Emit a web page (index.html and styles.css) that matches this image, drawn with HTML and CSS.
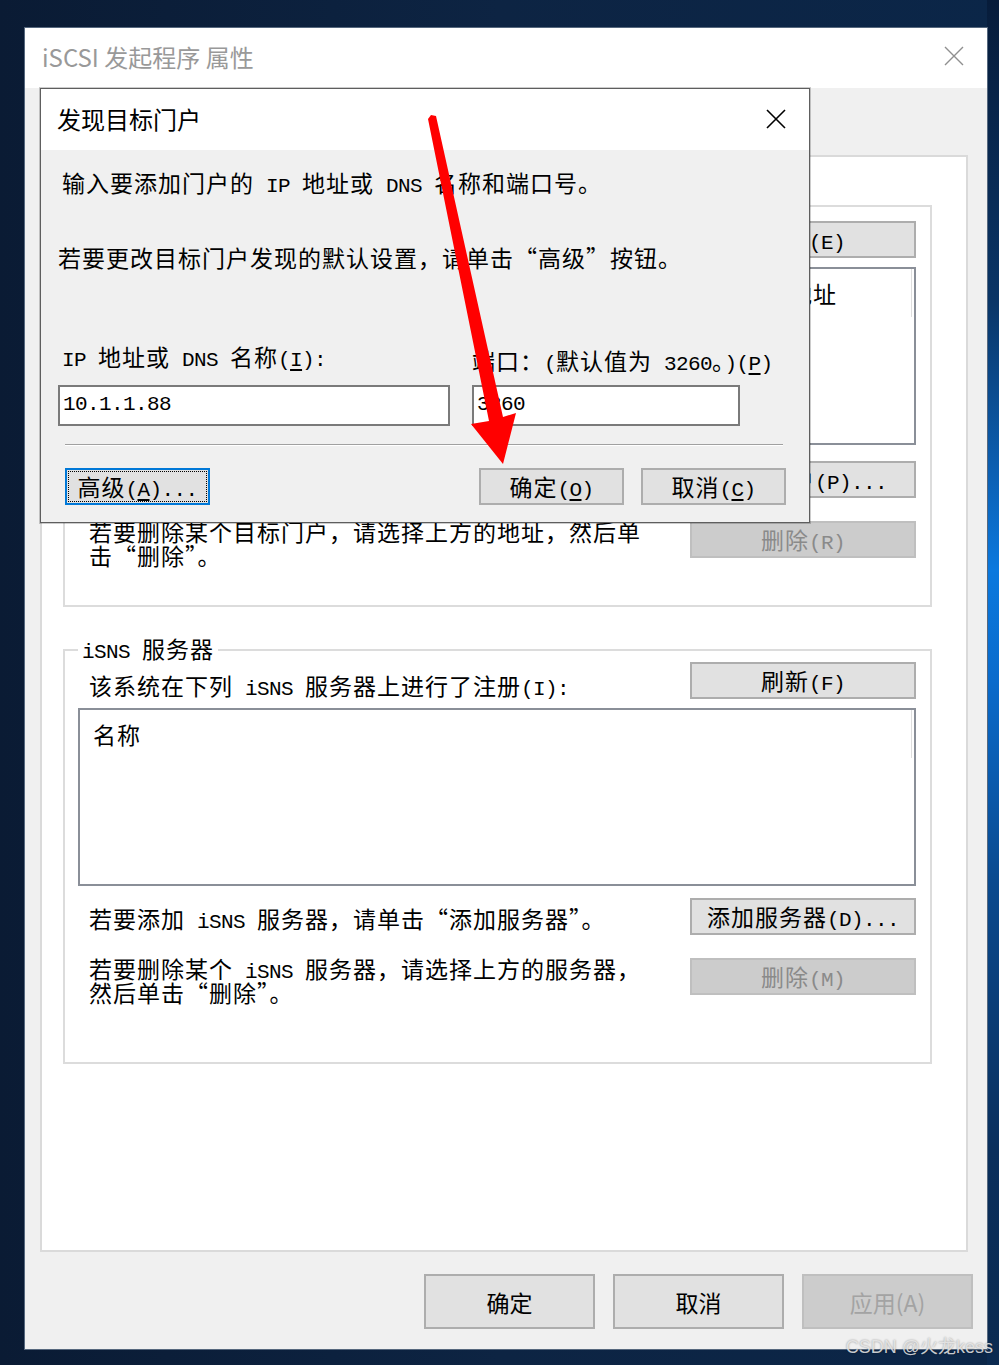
FILE: index.html
```html
<!DOCTYPE html>
<html lang="zh-CN">
<head>
    <meta charset="UTF-8">
    <meta name="viewport" content="width=device-width, initial-scale=1.0">
    <title>iSCSI 发起程序 属性</title>
    <link rel="stylesheet" href="styles.css">
</head>
<body>
<div class="desktop">

    <!-- ventana principal -->
    <div class="window">
        <div class="titlebar">
            <span class="title">iSCSI 发起程序 属性</span>
            <svg class="x-close" width="20" height="20" viewBox="0 0 20 20"><path d="M1 1L19 19M19 1L1 19" stroke="#8f8f8f" stroke-width="1.4" fill="none"/></svg>
        </div>
        <div class="window-body">
            <div class="tabs"></div>
            <div class="tab-page ss">
                <fieldset class="group g-portals">
                    <legend>目标门户</legend>
                    <div class="row row-top">
                        <p class="hint">系统将在下列门户上查找目标<span class="lat">(T):</span></p>
                        <button class="btn">刷新<span class="lat">(E)</span></button>
                    </div>
                    <div class="listview">
                        <div class="lv-head">
                            <span>地址</span>
                            <span>端口</span>
                            <span>适配器</span>
                            <span><span class="lat">IP </span>地址</span>
                        </div>
                    </div>
                    <div class="row row-add">
                        <p class="hint">若要添加目标门户，请单击“发现门户”。</p>
                        <button class="btn">发现门户<span class="lat">(P)...</span></button>
                    </div>
                    <div class="row row-del">
                        <p class="hint">若要删除某个目标门户，请选择上方的地址，然后单<br>击“删除”。</p>
                        <button class="btn" disabled>删除<span class="lat">(R)</span></button>
                    </div>
                </fieldset>

                <fieldset class="group g-isns">
                    <legend><span class="lat">iSNS </span>服务器</legend>
                    <div class="row row-top">
                        <p class="hint">该系统在下列<span class="lat"> iSNS </span>服务器上进行了注册<span class="lat">(I):</span></p>
                        <button class="btn">刷新<span class="lat">(F)</span></button>
                    </div>
                    <div class="listview">
                        <div class="lv-head">
                            <span>名称</span>
                        </div>
                    </div>
                    <div class="row row-add">
                        <p class="hint">若要添加<span class="lat"> iSNS </span>服务器，请单击“添加服务器”。</p>
                        <button class="btn">添加服务器<span class="lat">(D)...</span></button>
                    </div>
                    <div class="row row-del">
                        <p class="hint">若要删除某个<span class="lat"> iSNS </span>服务器，请选择上方的服务器，<br>然后单击“删除”。</p>
                        <button class="btn" disabled>删除<span class="lat">(M)</span></button>
                    </div>
                </fieldset>
            </div>
            <div class="footer">
                <button class="btn-lg">确定</button>
                <button class="btn-lg">取消</button>
                <button class="btn-lg" disabled>应用(A)</button>
            </div>
        </div>
    </div>

    <!-- dialogo encima -->
    <div class="dialog">
        <div class="dlg-title">
            <span>发现目标门户</span>
            <svg class="x-close" width="20" height="20" viewBox="0 0 20 20"><path d="M1 1L19 19M19 1L1 19" stroke="#000" stroke-width="1.6" fill="none"/></svg>
        </div>
        <div class="dlg-body ss">
            <p class="dlg-line l1">输入要添加门户的<span class="lat"> IP </span>地址或<span class="lat"> DNS </span>名称和端口号。</p>
            <p class="dlg-line l2">若要更改目标门户发现的默认设置，请单击“高级”按钮。</p>
            <div class="fields">
                <div class="field field-ip">
                    <label class="lbl"><span class="lat">IP </span>地址或<span class="lat"> DNS </span>名称<span class="lat">(<u>I</u>):</span></label>
                    <div class="input">10.1.1.88</div>
                </div>
                <div class="field field-port">
                    <label class="lbl lbl-port">端口：<span class="lat">(</span>默认值为<span class="lat"> 3260</span>。<span class="lat">)(<u>P</u>)</span></label>
                    <div class="input">3260</div>
                </div>
            </div>
            <div class="sep"></div>
            <div class="dlg-buttons">
                <button class="btn btn-focus">高级<span class="lat">(<u>A</u>)...</span></button>
                <button class="btn btn-ok">确定<span class="lat">(<u>O</u>)</span></button>
                <button class="btn">取消<span class="lat">(<u>C</u>)</span></button>
            </div>
        </div>
    </div>

    <svg class="arrow" width="999" height="1365" viewBox="0 0 999 1365">
        <polygon points="428,119 431,115 436,116 503,417 516,413 503,464 471,424 489,421" fill="#ff0000"/>
    </svg>

    <div class="watermark">CSDN @火龙kess</div>
</div>
</body>
</html>
```

FILE: styles.css
```css
* {
    box-sizing: border-box;
}

body {
    margin: 0;
    background: #0b1d38;
    font-family: "Noto Sans CJK SC", "Noto Sans", sans-serif;
    color: #000;
}

p {
    margin: 0;
}

.desktop {
    position: relative;
    width: 999px;
    height: 1365px;
    padding: 27px 11px 15px 24px;
    background:
        linear-gradient(180deg, #071c3a 0, #0a3566 300px, #0c5fb2 470px, #0b79de 570px, #0a6bcc 680px, #0a4a8f 880px, #0a2f5c 1150px, #0b2a50 100%) right top / 12px 100% no-repeat,
        linear-gradient(90deg, #0a1b34 0, #0d2443 50%, #0b2648 100%);
}

/* texto estilo SimSun */
.ss {
    font-size: 23px;
    letter-spacing: 1px;
}

.lat {
    font-family: "Liberation Mono", monospace;
    font-size: 21px;
    letter-spacing: -0.6px;
    line-height: 0;
}

u {
    text-underline-offset: 3px;
}

.x-close {
    display: block;
}

/* ventana */
.window {
    width: 964px;
    height: 1323px;
    border: 1px solid #56687e;
    background: #f0f0f0;
    display: flex;
    flex-direction: column;
}

.titlebar {
    height: 60px;
    flex-shrink: 0;
    background: #fff;
    display: flex;
    align-items: center;
    justify-content: space-between;
    padding: 0 23px 4px 17px;
}

.title {
    font-size: 24px;
    color: #999;
}

.window-body {
    flex: 1;
    display: flex;
    flex-direction: column;
    padding: 0 14px 20px 15px;
}

.tabs {
    height: 67px;
}

.tab-page {
    height: 1097px;
    margin-right: 5px;
    padding-top: 36px;
    background: #fff;
    border: 2px solid #dadada;
}

.group {
    margin: 0 34px 0 21px;
    padding: 0 14px 38px 13px;
    border: 2px solid #dcdcdc;
    min-width: 0;
}

.group legend {
    padding: 0 4px;
    height: 26px;
    line-height: 22px;
}

.g-isns {
    margin-top: 30px;
    padding-bottom: 58px;
}

.row {
    display: flex;
    justify-content: space-between;
    align-items: flex-start;
}

.hint {
    margin: 8px 0 0 11px;
    line-height: 24px;
    white-space: nowrap;
}

.g-portals .row-top { margin-top: 2px; }
.g-isns .row-top { margin-top: -1px; }
.row-top .hint { margin-top: 11px; }

.g-portals .row-add { margin-top: 16px; }
.g-isns .row-add { margin-top: 12px; }

.row-del { margin-top: 21px; }
.row-del .hint { margin-top: 0; }
.row-del .btn { margin-top: 2px; }

.listview {
    height: 178px;
    margin-top: 9px;
    border: 2px solid #8a8f98;
    background: #fff;
}

.lv-head {
    display: grid;
    grid-template-columns: 300px 140px 220px 1fr;
    height: 48px;
    align-items: center;
    padding-left: 13px;
    margin-right: 2px;
    border-right: 1px solid #dedede;
    line-height: 24px;
    white-space: nowrap;
}

.btn {
    width: 226px;
    height: 37px;
    flex-shrink: 0;
    padding: 0;
    border: 2px solid #adadad;
    background: #e1e1e1;
    color: #000;
    font: inherit;
    letter-spacing: inherit;
    line-height: 31px;
    white-space: nowrap;
}

.btn:disabled {
    background: #cccccc;
    border-color: #bfbfbf;
    color: #8a8a8a;
}

.footer {
    display: flex;
    justify-content: flex-end;
    gap: 18px;
    margin-top: 22px;
}

.btn-lg {
    width: 171px;
    height: 55px;
    padding: 0;
    border: 2px solid #adadad;
    background: #e1e1e1;
    color: #000;
    font-family: inherit;
    font-size: 23px;
}

.btn-lg:disabled {
    background: #cccccc;
    border-color: #bfbfbf;
    color: #a3a3a3;
}

/* dialogo */
.dialog {
    position: absolute;
    left: 40px;
    top: 88px;
    width: 770px;
    height: 435px;
    border: 1px solid #5e5e5e;
    box-shadow: 0 0 0 1px rgba(0, 0, 0, 0.2);
    background: #f0f0f0;
}

.dlg-title {
    height: 61px;
    background: #fff;
    display: flex;
    align-items: center;
    justify-content: space-between;
    padding: 0 23px 2px 16px;
    font-size: 24px;
}

.dlg-body {
    padding-left: 17px;
}

.dlg-line {
    height: 30px;
    line-height: 30px;
    white-space: nowrap;
}

.l1 {
    margin: 17px 0 0 4px;
}

.l2 {
    margin-top: 45px;
}

.fields {
    display: flex;
    gap: 22px;
    margin-top: 69px;
}

.field-ip { width: 392px; }
.field-port { width: 268px; }

.lbl {
    display: block;
    height: 30px;
    line-height: 30px;
    margin-left: 4px;
    white-space: nowrap;
}

.lbl-port {
    padding-top: 8px;
    line-height: 22px;
    margin-left: 0;
}

.input {
    height: 41px;
    margin-top: 14px;
    padding-left: 3px;
    border: 2px solid #7a7a7a;
    background: #fff;
    font-family: "Liberation Mono", monospace;
    font-size: 21px;
    letter-spacing: -0.6px;
    line-height: 35px;
}

.sep {
    margin: 18px 26px 0 7px;
    border-top: 1px solid #a0a0a0;
    border-bottom: 1px solid #fff;
}

.dlg-buttons {
    display: flex;
    gap: 17px;
    margin-top: 22px;
    padding: 0 23px 0 7px;
}

.dlg-buttons .btn {
    width: 145px;
}

.btn-focus {
    border-color: #0078d7;
    outline: 1px dotted #000;
    outline-offset: -4px;
}

.btn-ok {
    margin-left: auto;
}

.arrow {
    position: absolute;
    left: 0;
    top: 0;
    pointer-events: none;
}

.watermark {
    position: absolute;
    right: 6px;
    bottom: 7px;
    font-family: "Liberation Sans", "Noto Sans CJK SC", sans-serif;
    font-size: 18px;
    line-height: 22px;
    color: rgba(235, 235, 235, 0.85);
    text-shadow: 0 0 2px rgba(0, 0, 0, 0.4);
}
```
